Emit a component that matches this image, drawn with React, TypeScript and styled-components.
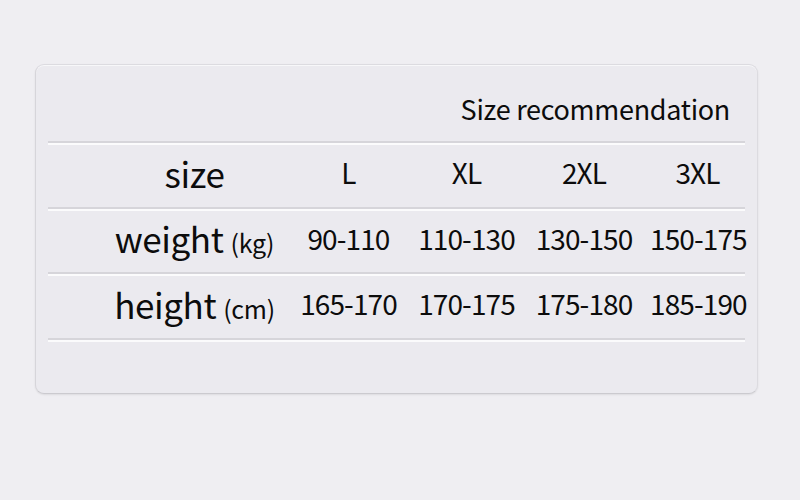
import React from "react";
import styled, { createGlobalStyle } from "styled-components";

const Global = createGlobalStyle`
  html, body { margin: 0; padding: 0; background: #efeef2; }
  body { font-family: "Noto Sans CJK SC", "Noto Sans", sans-serif; color: #0c0c0c; }
`;

const Page = styled.div`
  width: 800px;
  height: 500px;
  padding: 64px 0 0 35px;
  box-sizing: border-box;
`;

const Card = styled.div`
  width: 723px;
  height: 330px;
  box-sizing: border-box;
  background: #ebeaef;
  border-radius: 9px;
  border: 1px solid #dcdbe0;
  border-bottom-color: #cbcacf;
  border-left-color: #d6d5da;
  box-shadow: 0 1px 2px rgba(0, 0, 0, 0.08), inset 0 1px 0 #f7f7f9;
  padding: 0 12px;
  display: flex;
  flex-direction: column;
`;

const TitleRow = styled.div`
  height: 78px;
  display: flex;
  align-items: center;
  justify-content: flex-end;
  padding-right: 15px;
  padding-top: 11px;
  box-sizing: border-box;
  border-bottom: 2px solid #d6d5da;
  box-shadow: 0 2px 0 #fbfbfc;
`;

const Title = styled.span`
  font-size: 27px;
  letter-spacing: -0.3px;
  line-height: 1;
`;

const Row = styled.div`
  height: 63.5px;
  display: grid;
  grid-template-columns: 242px 117px 117px 117px 104px;
  align-items: center;
  box-sizing: border-box;
  border-bottom: 2px solid #d6d5da;
  box-shadow: 0 2px 0 #fbfbfc;
  margin-top: 2px;
  padding-bottom: 7px;

  & > :nth-child(3) { padding-left: 2px; }
  & > :nth-child(4) { padding-left: 3px; }
  & > :nth-child(5) { padding-left: 9px; }
`;

const Label = styled.div`
  padding-left: 51px;
  display: flex;
  justify-content: center;
  align-items: baseline;
  gap: 7px;
  line-height: 1;
  white-space: nowrap;
`;

const Name = styled.span`
  font-size: 35px;
  letter-spacing: -0.4px;
`;

const Unit = styled.span`
  font-size: 25px;
  letter-spacing: -0.3px;
`;

const Cell = styled.div`
  text-align: center;
  font-size: 28px;
  letter-spacing: -0.9px;
  line-height: 1;
  white-space: nowrap;
`;

const rows = [
  { name: "size", unit: "", values: ["L", "XL", "2XL", "3XL"] },
  { name: "weight", unit: "(kg)", values: ["90-110", "110-130", "130-150", "150-175"] },
  { name: "height", unit: "(cm)", values: ["165-170", "170-175", "175-180", "185-190"] },
];

export default function App() {
  return (
    <>
      <Global />
      <Page>
        <Card>
          <TitleRow>
            <Title>Size recommendation</Title>
          </TitleRow>
          {rows.map((r) => (
            <Row key={r.name}>
              <Label>
                <Name>{r.name}</Name>
                {r.unit && <Unit>{r.unit}</Unit>}
              </Label>
              {r.values.map((v) => (
                <Cell key={v}>{v}</Cell>
              ))}
            </Row>
          ))}
        </Card>
      </Page>
    </>
  );
}
